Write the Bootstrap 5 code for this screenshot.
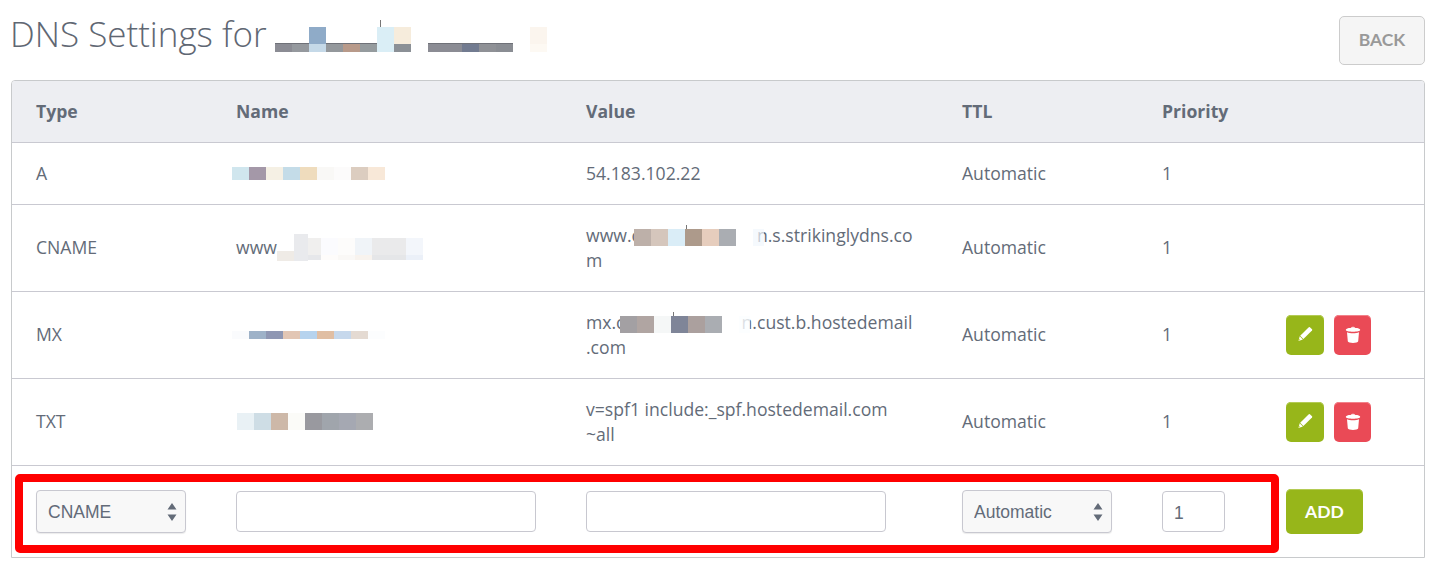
<!DOCTYPE html>
<html lang="en">
<head>
<meta charset="utf-8">
<title>DNS Settings</title>
<link href="https://cdn.jsdelivr.net/npm/bootstrap@5.3.0/dist/css/bootstrap.min.css" rel="stylesheet">
<style>
html,body{background:#fff;overflow:hidden}
body{font-family:"Open Sans","Liberation Sans",sans-serif;font-size:17.6px;line-height:25px;color:#636b78}
.page-wrap{padding:0 13px 0 11px}
.page-head{height:80px}
.page-title{font-family:"Open Sans",sans-serif;font-weight:300;font-size:35px;line-height:1;color:#5f6773;margin:0 0 11px -1px}
.title-blur{display:block;margin-left:8px;margin-top:1px}
.back-btn{width:86px;height:49px;padding:0;font-family:Lato,sans-serif;font-weight:700;font-size:17.5px;color:#999;background:#f5f5f5;border:1px solid #ccc;border-radius:5px}
.table-box{position:relative;border:1px solid #c8cacc;border-radius:4px 4px 0 0;overflow:hidden;height:478px}
.dns-table{table-layout:fixed;width:1412px;margin:0;border-collapse:collapse;color:#636b78;--bs-table-color:#636b78}
.dns-table th,.dns-table td{padding:0 24px;vertical-align:middle;border:0;border-bottom:1px solid #c9c9d1;font-size:17.6px;line-height:25px;box-shadow:none}
.dns-table thead th{height:61px;background:#edeef2;font-weight:700;color:#636b78}
.dns-table tbody td{padding-top:18px;padding-bottom:18px}
.dns-table tbody tr.add-row td{padding-top:2px;padding-bottom:0;height:91px;border-bottom:0}
.blur-svg{display:block;margin-left:-4px}
.blur-over{display:inline-block;vertical-align:-4px;overflow:visible;position:relative;z-index:1}
.over-c{margin-left:-6px}
.over-m{margin-left:-5px}
.blur-txt{margin-left:1px}
.dns-select{height:43px;font-family:"Liberation Sans",sans-serif;font-size:17.5px;color:#636b78;padding:0 24px 0 11px;border:1px solid #c8c8d0;border-radius:4px;box-shadow:0 1px 1px rgba(0,0,0,.08);background-color:#f8f8f8;background-image:url("data:image/svg+xml,%3Csvg xmlns='http://www.w3.org/2000/svg' width='10' height='18'%3E%3Cpath fill='%23636b78' d='M5 0l4.5 6.5h-9zM5 18l-4.5-6.5h9z'/%3E%3C/svg%3E");background-repeat:no-repeat;background-position:right 8px center;background-size:10px 18px}
.type-sel{width:150px}
.dns-input{height:41px;width:300px;font-family:"Liberation Sans",sans-serif;font-size:17.5px;color:#636b78;padding:4px 11px 0;border:1px solid #c8c8d0;border-radius:4px;background:#fff}
.prio-input{width:63px}
.act-row{gap:10px}
.act-btn{width:38px;height:40px;padding:0;border-radius:5px;border:0;display:inline-flex;align-items:center;justify-content:center}
.act-edit{background:#97b61a;box-shadow:inset 0 1px 0 #b4cb55}
.act-del{background:#ea4a56;width:37px;box-shadow:inset 0 1px 0 #f2828a}
.add-btn{width:77px;height:45px;padding:0;border:0;border-radius:5px;background:#97b61a;box-shadow:inset 0 1px 0 #b4cb55;color:#fff;font-family:Lato,sans-serif;font-weight:700;font-size:17.5px}
.act-edit:hover,.add-btn:hover{background:#97b61a;color:#fff}
.act-del:hover{background:#ea4a56}
.red-frame{position:absolute;left:3px;top:393px;width:1264px;height:79px;border:8px solid #f00;border-radius:5px;pointer-events:none}
</style>
</head>
<body>
<div class="page-wrap">
  <div class="page-head d-flex justify-content-between align-items-start pt-3">
    <div class="d-flex align-items-start">
      <h1 class="page-title">DNS Settings for</h1>
      <svg class="title-blur" width="272" height="40" viewBox="275 17 272 40" aria-hidden="true">
        <rect x="275" y="43" width="102" height="1.500" fill="#6f7178"/><rect x="428" y="43" width="85" height="1.500" fill="#6f7178"/><rect x="380" y="20" width="1" height="8" fill="#777"/>
        <rect x="309" y="27" width="17" height="17" fill="#8fabc8"/><rect x="377" y="27" width="17" height="25" fill="#daeef6"/><rect x="394" y="27" width="17" height="17" fill="#f6ecdc"/>
        <rect x="275" y="44" width="17" height="8" fill="#8b8c94"/><rect x="292" y="44" width="17" height="8" fill="#95999e"/><rect x="309" y="44" width="17" height="8" fill="#c5d9e8"/><rect x="326" y="44" width="17" height="8" fill="#94989c"/><rect x="343" y="44" width="17" height="8" fill="#b89a8a"/><rect x="360" y="44" width="17" height="8" fill="#959b9e"/><rect x="394" y="44" width="17" height="8" fill="#8b9096"/>
        <rect x="428" y="44" width="34" height="8" fill="#8b8c94"/><rect x="462" y="44" width="17" height="8" fill="#727b90"/><rect x="479" y="44" width="17" height="8" fill="#8f9196"/><rect x="496" y="44" width="17" height="8" fill="#8a8d93"/>
        <rect x="530" y="27" width="17" height="17" fill="#fbf5ee"/><rect x="530" y="44" width="17" height="8" fill="#fdf9f3"/>
      </svg>
    </div>
    <button type="button" class="btn back-btn">BACK</button>
  </div>
  <div class="table-box">
    <table class="table dns-table">
      <colgroup><col style="width:200px"><col style="width:350px"><col style="width:376px"><col style="width:200px"><col style="width:124px"><col style="width:162px"></colgroup>
      <thead><tr><th>Type</th><th>Name</th><th>Value</th><th>TTL</th><th>Priority</th><th></th></tr></thead>
      <tbody>
        <tr>
          <td>A</td>
          <td><svg class="blur-svg" width="153" height="13" aria-hidden="true"><rect width="17" height="13" fill="#d0e6ee"/><rect x="17" width="17" height="13" fill="#a498a8"/><rect x="34" width="17" height="13" fill="#f5f0e4"/><rect x="51" width="17" height="13" fill="#c4dce8"/><rect x="68" width="17" height="13" fill="#efdcbd"/><rect x="85" width="17" height="13" fill="#f9f8f6"/><rect x="102" width="17" height="13" fill="#fcfbfb"/><rect x="119" width="17" height="13" fill="#dccdc0"/><rect x="136" width="17" height="13" fill="#f8e8d8"/></svg></td>
          <td>54.183.102.22</td><td>Automatic</td><td>1</td><td></td>
        </tr>
        <tr>
          <td>CNAME</td>
          <td><div class="d-flex align-items-center">www<svg width="146" height="27" aria-hidden="true"><rect y="17" width="17" height="10" fill="#efebe6"/><rect x="17" width="14" height="27" fill="#e9eaed"/><rect x="31" y="4" width="13" height="17" fill="#f0efee"/><rect x="44" y="4" width="17" height="17" fill="#fbfbfe"/><rect x="61" y="4" width="17" height="17" fill="#fdfcfb"/><rect x="78" y="4" width="17" height="17" fill="#f0f4f8"/><rect x="95" y="4" width="34" height="17" fill="#eaeaeb"/><rect x="129" y="4" width="17" height="17" fill="#f3f6fb"/><rect x="31" y="21" width="13" height="5" fill="#e6e7ea"/><rect x="44" y="21" width="17" height="5" fill="#fefcfb"/><rect x="61" y="21" width="17" height="5" fill="#faf8f6"/><rect x="78" y="21" width="17" height="5" fill="#f8f3ee"/><rect x="95" y="21" width="34" height="5" fill="#e5e6e8"/><rect x="129" y="21" width="17" height="5" fill="#ebf0f8"/></svg></div></td>
          <td>www.c<svg class="blur-over over-c" width="123" height="17" aria-hidden="true"><rect width="17" height="17" fill="#bdb0a9"/><rect x="17" width="17" height="17" fill="#d5c6bc"/><rect x="34" width="17" height="17" fill="#daedf7"/><rect x="51" width="17" height="17" fill="#ad9a8b"/><rect x="68" width="17" height="17" fill="#e6cdbd"/><rect x="85" width="17" height="17" fill="#aaadb2"/><rect x="52" y="-4" width="1" height="4" fill="#777"/><rect x="119" width="11" height="17" fill="#f1f6fc" fill-opacity=".7"/></svg>n.s.strikinglydns.co<br>m</td>
          <td>Automatic</td><td>1</td><td></td>
        </tr>
        <tr>
          <td>MX</td>
          <td><svg class="blur-svg" width="153" height="8" aria-hidden="true"><rect width="17" height="8" fill="#fafbfd"/><rect x="17" width="17" height="8" fill="#9eb2c8"/><rect x="34" width="17" height="8" fill="#8f97b3"/><rect x="51" width="17" height="8" fill="#e2c6b4"/><rect x="68" width="17" height="8" fill="#b6d3ee"/><rect x="85" width="17" height="8" fill="#e0bea3"/><rect x="102" width="17" height="8" fill="#c6d8ec"/><rect x="119" width="17" height="8" fill="#e4dad2"/><rect x="136" width="17" height="8" fill="#fcfdfe"/></svg></td>
          <td>mx.c<svg class="blur-over over-m" width="122" height="17" aria-hidden="true"><rect width="17" height="17" fill="#a3a0a3"/><rect x="17" width="17" height="17" fill="#b0a5a2"/><rect x="34" width="17" height="17" fill="#f5f7f7"/><rect x="51" width="17" height="17" fill="#7f8598"/><rect x="68" width="17" height="17" fill="#aba09e"/><rect x="85" width="17" height="17" fill="#aaadb2"/><rect x="53" y="-4" width="1" height="4" fill="#777"/><rect x="119" width="11" height="17" fill="#fbfeff" fill-opacity=".8"/></svg>n.cust.b.hostedemail<br>.com</td>
          <td>Automatic</td><td>1</td>
          <td><div class="d-flex act-row">
            <button type="button" class="btn act-btn act-edit" aria-label="Edit"><svg width="16" height="17" viewBox="0 0 16 17"><path fill="#fff" d="M11.800 1.200a.8.8 0 0 1 1.100 0l2.100 2.100a.8.8 0 0 1 0 1.100l-8.600 8.600-3.200-3.200z"/><path fill="#fff" d="M2.700 10.300l3.200 3.200-4.400 1.400z"/><path fill="#c6d82a" d="M2.300 13l.9.9-1.700.6z"/></svg></button>
            <button type="button" class="btn act-btn act-del" aria-label="Delete"><svg width="16" height="18" viewBox="0 0 16 18"><path fill="#fff" d="M6 1.800a2 1 0 0 1 4 0z"/><path fill="#fff" d="M.8 4C.8 2.700 4 1.800 8 1.800s7.200.9 7.200 2.200c0 1-3.200 1.700-7.200 1.700S.8 5 .8 4z"/><path fill="#fff" d="M2 6.300c1.500.7 3.600 1 6 1s4.500-.3 6-1l-.8 9C13 16.500 10.500 17 8 17s-5-.5-5.200-1.700z"/></svg></button>
          </div></td>
        </tr>
        <tr>
          <td>TXT</td>
          <td><svg class="blur-svg blur-txt" width="136" height="17" aria-hidden="true"><rect width="17" height="17" fill="#e9f1f5"/><rect x="17" width="17" height="17" fill="#cedde5"/><rect x="34" width="17" height="17" fill="#cdb8a8"/><rect x="51" width="17" height="17" fill="#fbfbf8"/><rect x="68" width="17" height="17" fill="#99999f"/><rect x="85" width="17" height="17" fill="#a0a5ac"/><rect x="102" width="17" height="17" fill="#a5a8b2"/><rect x="119" width="17" height="17" fill="#acadb0"/></svg></td>
          <td>v=spf1 include:_spf.hostedemail.com<br>~all</td>
          <td>Automatic</td><td>1</td>
          <td><div class="d-flex act-row">
            <button type="button" class="btn act-btn act-edit" aria-label="Edit"><svg width="16" height="17" viewBox="0 0 16 17"><path fill="#fff" d="M11.800 1.200a.8.8 0 0 1 1.100 0l2.100 2.100a.8.8 0 0 1 0 1.100l-8.600 8.600-3.200-3.200z"/><path fill="#fff" d="M2.700 10.300l3.200 3.200-4.400 1.400z"/><path fill="#c6d82a" d="M2.300 13l.9.9-1.700.6z"/></svg></button>
            <button type="button" class="btn act-btn act-del" aria-label="Delete"><svg width="16" height="18" viewBox="0 0 16 18"><path fill="#fff" d="M6 1.800a2 1 0 0 1 4 0z"/><path fill="#fff" d="M.8 4C.8 2.700 4 1.800 8 1.800s7.200.9 7.200 2.200c0 1-3.200 1.700-7.200 1.700S.8 5 .8 4z"/><path fill="#fff" d="M2 6.300c1.500.7 3.600 1 6 1s4.500-.3 6-1l-.8 9C13 16.500 10.500 17 8 17s-5-.5-5.200-1.700z"/></svg></button>
          </div></td>
        </tr>
        <tr class="add-row">
          <td><select class="form-select dns-select type-sel" aria-label="Type"><option>CNAME</option><option>A</option><option>MX</option><option>TXT</option></select></td>
          <td><input class="form-control dns-input" type="text" aria-label="Name"></td>
          <td><input class="form-control dns-input" type="text" aria-label="Value"></td>
          <td><select class="form-select dns-select type-sel" aria-label="TTL"><option>Automatic</option></select></td>
          <td><input class="form-control dns-input prio-input" type="text" value="1" aria-label="Priority"></td>
          <td><button type="button" class="btn add-btn">ADD</button></td>
        </tr>
      </tbody>
    </table>
    <div class="red-frame"></div>
  </div>
</div>
</body>
</html>
